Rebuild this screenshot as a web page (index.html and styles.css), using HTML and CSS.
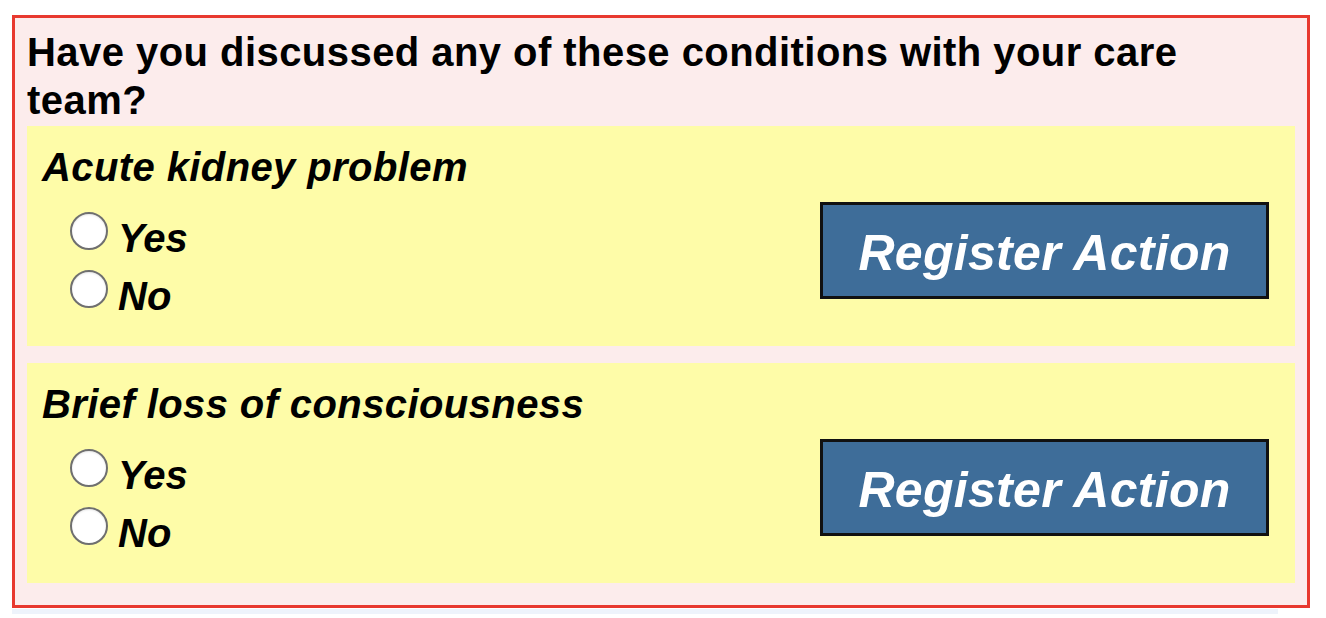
FILE: index.html
```html
<!DOCTYPE html>
<html lang="en">
<head>
<meta charset="utf-8">
<title>Conditions</title>
<link rel="stylesheet" href="styles.css">
</head>
<body>
<div class="card">
  <h1 class="question">Have you discussed any of these conditions with your care team?</h1>
  <div class="panel">
    <div class="title">Acute kidney problem</div>
    <div class="body">
      <div class="options">
        <label class="opt"><input type="radio" name="c1" class="radio"><span>Yes</span></label>
        <label class="opt"><input type="radio" name="c1" class="radio"><span>No</span></label>
      </div>
      <button class="btn" type="button">Register Action</button>
    </div>
  </div>
  <div class="panel">
    <div class="title">Brief loss of consciousness</div>
    <div class="body">
      <div class="options">
        <label class="opt"><input type="radio" name="c2" class="radio"><span>Yes</span></label>
        <label class="opt"><input type="radio" name="c2" class="radio"><span>No</span></label>
      </div>
      <button class="btn" type="button">Register Action</button>
    </div>
  </div>
</div>
<div class="under"></div>
</body>
</html>
```

FILE: styles.css
```css
html, body {
  margin: 0;
  padding: 0;
  background: #ffffff;
}

body {
  font-family: "Liberation Sans", Arial, Helvetica, sans-serif;
  color: #000;
}

.card {
  box-sizing: border-box;
  width: 1298px;
  margin: 15px 0 0 12px;
  border: 3px solid #e8392f;
  background: #fcecec;
  padding: 10px 12px 22px;
}

.question {
  margin: 0 0 2px;
  padding-right: 40px;
  font-size: 40px;
  line-height: 48px;
  font-weight: bold;
  letter-spacing: 0.45px;
}

.panel {
  background: #fefca8;
  height: 220px;
  box-sizing: border-box;
  padding: 17px 26px 0 15px;
}

.panel + .panel {
  margin-top: 17px;
}

.title {
  font-size: 40px;
  line-height: 48px;
  font-weight: bold;
  font-style: italic;
  letter-spacing: 0.4px;
}

.body {
  display: flex;
  justify-content: space-between;
  align-items: flex-start;
}

.options {
  display: flex;
  flex-direction: column;
  margin: 18px 0 0 28px;
}

.opt {
  display: flex;
  align-items: flex-start;
  gap: 10px;
  font-size: 40px;
  line-height: 58px;
  font-weight: bold;
  font-style: italic;
}

.radio {
  appearance: none;
  -webkit-appearance: none;
  box-sizing: border-box;
  width: 38px;
  height: 38px;
  margin: 3px 0 0;
  border: 2px solid #6f6f6f;
  border-radius: 50%;
  background: #ffffff;
  box-shadow: inset 0 1px 2px rgba(0, 0, 0, 0.1);
}

.btn {
  box-sizing: border-box;
  width: 449px;
  height: 97px;
  margin-top: 11px;
  padding: 6px 0 0;
  border: 3px solid #111111;
  background: #3e6d99;
  color: #ffffff;
  font-family: "Liberation Sans", Arial, Helvetica, sans-serif;
  font-size: 50px;
  line-height: 85px;
  font-weight: bold;
  font-style: italic;
  letter-spacing: 0.3px;
  text-align: center;
}

.under {
  width: 1266px;
  height: 5px;
  margin: 1px 0 0 12px;
  background: #eef3fb;
}
```
